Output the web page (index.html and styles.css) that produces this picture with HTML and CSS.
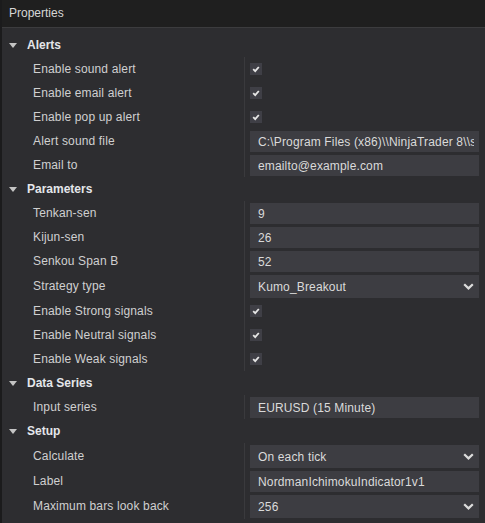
FILE: index.html
```html
<!DOCTYPE html>
<html>
<head>
<meta charset="utf-8">
<link rel="stylesheet" href="styles.css">
</head>
<body>
<div class="window">
  <div class="titlebar">Properties</div>
  <div class="grid">
    <section class="cat">
      <div class="cat-head"><span class="caret"></span>Alerts</div>
      <div class="row"><div class="label">Enable sound alert</div><div class="value"><span class="check"><svg width="12" height="12" viewBox="0 0 12 12"><path d="M3.2 6.2 L5.2 8.2 L8.8 4" fill="none" stroke="#e6e6e6" stroke-width="1.8"/></svg></span></div></div>
      <div class="row"><div class="label">Enable email alert</div><div class="value"><span class="check"><svg width="12" height="12" viewBox="0 0 12 12"><path d="M3.2 6.2 L5.2 8.2 L8.8 4" fill="none" stroke="#e6e6e6" stroke-width="1.8"/></svg></span></div></div>
      <div class="row"><div class="label">Enable pop up alert</div><div class="value"><span class="check"><svg width="12" height="12" viewBox="0 0 12 12"><path d="M3.2 6.2 L5.2 8.2 L8.8 4" fill="none" stroke="#e6e6e6" stroke-width="1.8"/></svg></span></div></div>
      <div class="row"><div class="label">Alert sound file</div><div class="value"><div class="box"><span class="clip">C:\Program Files (x86)\\NinjaTrader 8\\sounds\\Alert1.wav</span></div></div></div>
      <div class="row"><div class="label">Email to</div><div class="value"><div class="box">emailto@example.com</div></div></div>
    </section>
    <section class="cat">
      <div class="cat-head"><span class="caret"></span>Parameters</div>
      <div class="row"><div class="label">Tenkan-sen</div><div class="value"><div class="box">9</div></div></div>
      <div class="row"><div class="label">Kijun-sen</div><div class="value"><div class="box">26</div></div></div>
      <div class="row"><div class="label">Senkou Span B</div><div class="value"><div class="box">52</div></div></div>
      <div class="row tall"><div class="label">Strategy type</div><div class="value"><div class="box select"><span class="sel-text">Kumo_Breakout</span><svg class="chev" width="11" height="7" viewBox="0 0 11 7"><path d="M1.2 1.2 L5.5 5.4 L9.8 1.2" fill="none" stroke="#dcdcdc" stroke-width="2.2"/></svg></div></div></div>
      <div class="row"><div class="label">Enable Strong signals</div><div class="value"><span class="check"><svg width="12" height="12" viewBox="0 0 12 12"><path d="M3.2 6.2 L5.2 8.2 L8.8 4" fill="none" stroke="#e6e6e6" stroke-width="1.8"/></svg></span></div></div>
      <div class="row"><div class="label">Enable Neutral signals</div><div class="value"><span class="check"><svg width="12" height="12" viewBox="0 0 12 12"><path d="M3.2 6.2 L5.2 8.2 L8.8 4" fill="none" stroke="#e6e6e6" stroke-width="1.8"/></svg></span></div></div>
      <div class="row"><div class="label">Enable Weak signals</div><div class="value"><span class="check"><svg width="12" height="12" viewBox="0 0 12 12"><path d="M3.2 6.2 L5.2 8.2 L8.8 4" fill="none" stroke="#e6e6e6" stroke-width="1.8"/></svg></span></div></div>
    </section>
    <section class="cat">
      <div class="cat-head"><span class="caret"></span>Data Series</div>
      <div class="row"><div class="label">Input series</div><div class="value"><div class="box">EURUSD (15 Minute)</div></div></div>
    </section>
    <section class="cat">
      <div class="cat-head"><span class="caret"></span>Setup</div>
      <div class="row tall"><div class="label">Calculate</div><div class="value"><div class="box select"><span class="sel-text">On each tick</span><svg class="chev" width="11" height="7" viewBox="0 0 11 7"><path d="M1.2 1.2 L5.5 5.4 L9.8 1.2" fill="none" stroke="#dcdcdc" stroke-width="2.2"/></svg></div></div></div>
      <div class="row"><div class="label">Label</div><div class="value"><div class="box">NordmanIchimokuIndicator1v1</div></div></div>
      <div class="row tall"><div class="label">Maximum bars look back</div><div class="value"><div class="box select"><span class="sel-text">256</span><svg class="chev" width="11" height="7" viewBox="0 0 11 7"><path d="M1.2 1.2 L5.5 5.4 L9.8 1.2" fill="none" stroke="#dcdcdc" stroke-width="2.2"/></svg></div></div></div>
    </section>
  </div>
</div>
</body>
</html>
```

FILE: styles.css
```css
html, body {
  margin: 0;
  padding: 0;
  background: #2d2d30;
}

body {
  width: 485px;
  height: 523px;
  overflow: hidden;
  font-family: "Liberation Sans", Arial, sans-serif;
  font-size: 12px;
  letter-spacing: 0.15px;
  color: #d2d2d2;
}

.window {
  height: 523px;
  border-left: 2px solid #1b1b1c;
  background: #2d2d30;
  box-sizing: border-box;
}

.titlebar {
  height: 27px;
  line-height: 27px;
  padding-left: 7px;
  background: #1f1f1f;
  border-bottom: 1px solid #3c3c3e;
  color: #d6d6d6;
  letter-spacing: 0;
}

.grid {
  padding-top: 5px;
}

.cat-head {
  height: 24px;
  display: flex;
  align-items: center;
  padding-left: 7px;
  font-weight: bold;
  color: #e4e6ea;
  letter-spacing: 0;
}

.caret {
  width: 0;
  height: 0;
  border-left: 4px solid transparent;
  border-right: 4px solid transparent;
  border-top: 5px solid #c4c4c4;
  margin-right: 10px;
  margin-top: 1px;
}

.row {
  display: flex;
  height: 24px;
}

.row.tall {
  height: 26px;
}

.label {
  width: 243px;
  flex: none;
  border-right: 1px solid #3a3a3d;
  padding-left: 31px;
  box-sizing: border-box;
  display: flex;
  align-items: center;
  white-space: nowrap;
  color: #d0d0d0;
}

.value {
  flex: 1;
  padding: 2px 6px 1px 5px;
  display: flex;
  align-items: center;
  min-width: 0;
}

.check {
  width: 12px;
  height: 12px;
  background: #3f3f46;
  display: flex;
  margin-bottom: 1px;
}

.box {
  width: 100%;
  height: 100%;
  background: #3d3d42;
  box-sizing: border-box;
  padding: 0 5px 0 8px;
  display: flex;
  align-items: center;
  white-space: nowrap;
  overflow: hidden;
  color: #dadada;
}

.clip {
  display: block;
  overflow: hidden;
  white-space: nowrap;
  min-width: 0;
  flex: 1;
}

.select {
  justify-content: space-between;
}

.sel-text {
  flex: 1;
  overflow: hidden;
}

.chev {
  flex: none;
}
```
